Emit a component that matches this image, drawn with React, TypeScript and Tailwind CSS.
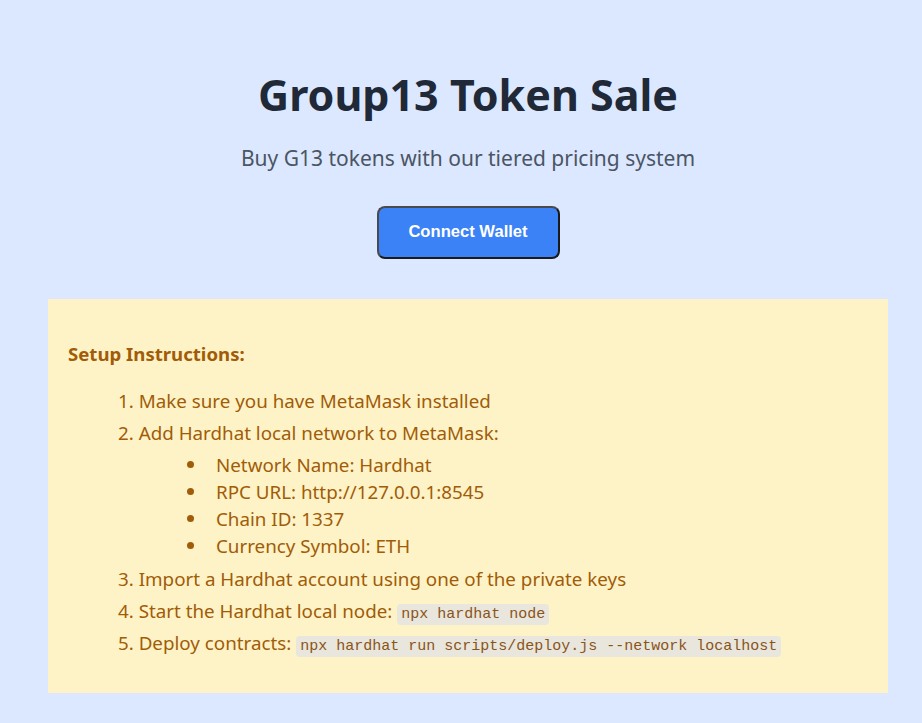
export default function App() {
  const sans = { fontFamily: '"Noto Sans", "Open Sans", sans-serif' };
  return (
    <div className="min-h-screen bg-[#dce8ff] pl-12 pr-[34px] pt-[60px] pb-8" style={sans}>
      <header className="flex flex-col items-center text-center">
        <h1 className="text-[43px] leading-[70px] font-bold text-[#1f2937]">Group13 Token Sale</h1>
        <p className="mt-[13px] text-[21px] leading-[30px] text-[#4b5563]">
          Buy G13 tokens with our tiered pricing system
        </p>
        <button
          className="mt-[33px] h-[53px] w-[183px] rounded-lg border-2 border-[#4a4a4a] border-b-[#1a1a1a] border-r-[#1a1a1a] bg-[#3b82f6] text-[16.6px] font-bold text-white"
          style={{ fontFamily: '"Liberation Sans", Arial, sans-serif' }}
        >
          Connect Wallet
        </button>
      </header>

      <section className="mt-[40px] bg-[#fef3c7] px-5 pt-[41px] pb-[38px] text-[#a15c07]">
        <h3 className="text-[18.6px] leading-[28px] font-bold">Setup Instructions:</h3>
        <ol className="mt-[21px] pl-[50px] text-[18.8px] leading-[24px]">
          <li className="mb-2">1. Make sure you have MetaMask installed</li>
          <li className="mb-2">
            2. Add Hardhat local network to MetaMask:
            <ul className="mt-[6px] pl-[69px]">
              {["Network Name: Hardhat", "RPC URL: http://127.0.0.1:8545", "Chain ID: 1337", "Currency Symbol: ETH"].map(
                (t) => (
                  <li key={t} className="flex h-[27px] items-center">
                    <span className="mr-[22px] h-[7px] w-[7px] rounded-full bg-[#a15c07]" />
                    {t}
                  </li>
                )
              )}
            </ul>
          </li>
          <li className="mb-2">3. Import a Hardhat account using one of the private keys</li>
          <li className="mb-2">
            4. Start the Hardhat local node: <Code>npx hardhat node</Code>
          </li>
          <li>
            5. Deploy contracts: <Code>npx hardhat run scripts/deploy.js --network localhost</Code>
          </li>
        </ol>
      </section>
    </div>
  );
}

function Code({ children }: { children: React.ReactNode }) {
  return (
    <code
      className="rounded bg-[#e9e6dd] px-1 py-[2px] text-[15px] leading-none text-[#8a5418]"
      style={{ fontFamily: '"Liberation Mono", "DejaVu Sans Mono", monospace' }}
    >
      {children}
    </code>
  );
}
